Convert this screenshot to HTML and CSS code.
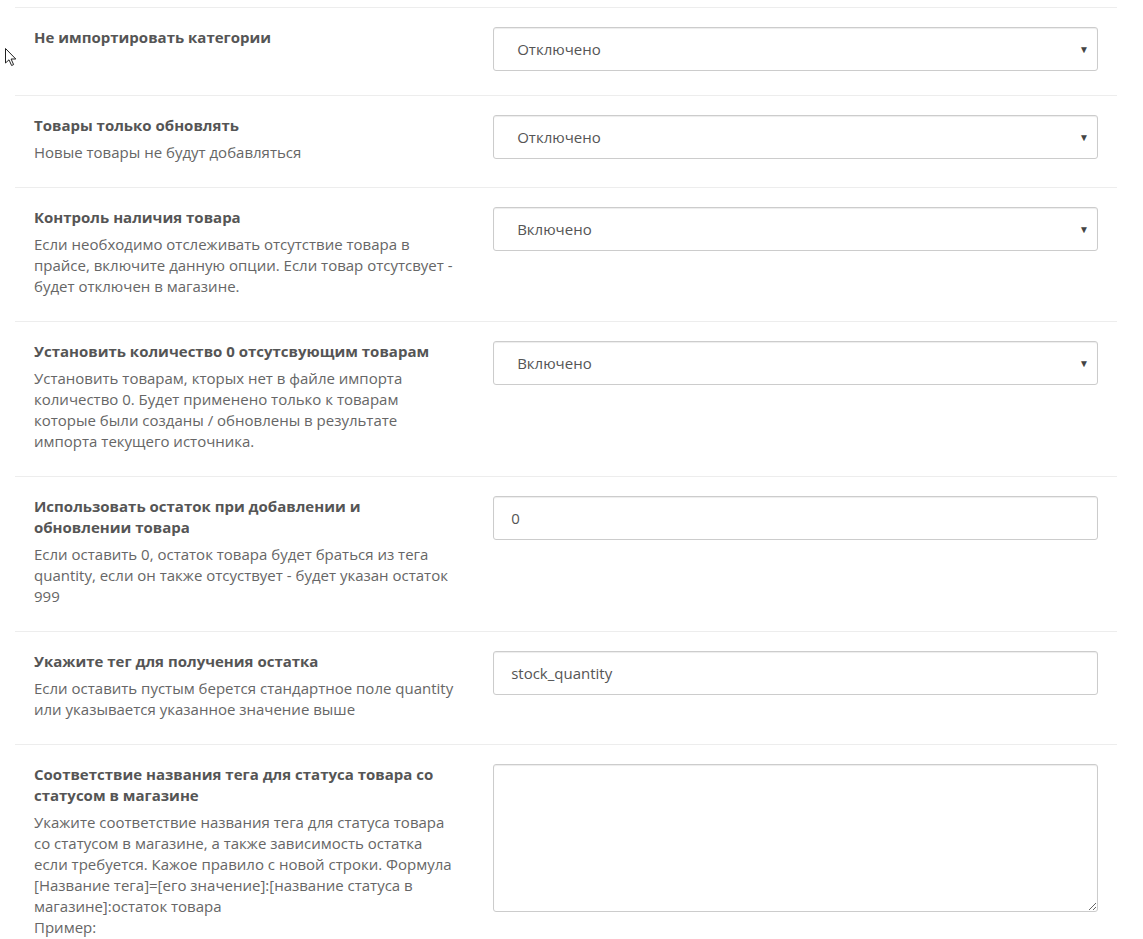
FILE: index.html
```html
<!DOCTYPE html>
<html lang="ru">
<head>
    <meta charset="UTF-8">
    <title>Настройки импорта</title>
    <link rel="stylesheet" href="styles.css">
</head>
<body>
    <div class="cursor">
        <svg width="13" height="20" viewBox="0 0 13 20">
            <path d="M1.5 1.5 L1.5 16 L5 12.8 L7.6 18.5 L9.6 17.6 L7.1 12 L11.8 12 Z" fill="#fff" stroke="#222" stroke-width="1" stroke-linejoin="round"/>
        </svg>
    </div>

    <div class="form">
        <div class="row">
            <div class="label">
                <div class="title">Не импортировать категории</div>
            </div>
            <div class="control">
                <div class="select">Отключено<span class="caret">▼</span></div>
            </div>
        </div>

        <div class="row">
            <div class="label">
                <div class="title">Товары только обновлять</div>
                <div class="help">Новые товары не будут добавляться</div>
            </div>
            <div class="control">
                <div class="select">Отключено<span class="caret">▼</span></div>
            </div>
        </div>

        <div class="row">
            <div class="label">
                <div class="title">Контроль наличия товара</div>
                <div class="help">Если необходимо отслеживать отсутствие товара в прайсе, включите данную опции. Если товар отсутсвует - будет отключен в магазине.</div>
            </div>
            <div class="control">
                <div class="select">Включено<span class="caret">▼</span></div>
            </div>
        </div>

        <div class="row">
            <div class="label">
                <div class="title">Установить количество 0 отсутсвующим товарам</div>
                <div class="help">Установить товарам, кторых нет в файле импорта количество 0. Будет применено только к товарам которые были созданы / обновлены в результате импорта текущего источника.</div>
            </div>
            <div class="control">
                <div class="select">Включено<span class="caret">▼</span></div>
            </div>
        </div>

        <div class="row">
            <div class="label">
                <div class="title">Использовать остаток при добавлении и обновлении товара</div>
                <div class="help">Если оставить 0, остаток товара будет браться из тега quantity, если он также отсуствует - будет указан остаток 999</div>
            </div>
            <div class="control">
                <input class="input" type="text" value="0">
            </div>
        </div>

        <div class="row">
            <div class="label">
                <div class="title">Укажите тег для получения остатка</div>
                <div class="help">Если оставить пустым берется стандартное поле quantity или указывается указанное значение выше</div>
            </div>
            <div class="control">
                <input class="input" type="text" value="stock_quantity">
            </div>
        </div>

        <div class="row">
            <div class="label">
                <div class="title">Соответствие названия тега для статуса товара со статусом в магазине</div>
                <div class="help">Укажите соответствие названия тега для статуса товара со статусом в магазине, а также зависимость остатка если требуется. Кажое правило с новой строки. Формула [Название тега]=[его значение]:[название статуса в магазине]:остаток товара<br>Пример:</div>
            </div>
            <div class="control">
                <textarea class="textarea"></textarea>
            </div>
        </div>
    </div>
</body>
</html>
```

FILE: styles.css
```css
body {
    margin: 0;
    padding: 0;
    background: #fff;
    font: 15px/21px "Open Sans", "Liberation Sans", sans-serif;
    color: #666;
}
.cursor {
    position: absolute;
    left: 4px;
    top: 47px;
}
.form {
    margin: 7px 26px 0 15px;
}
.row {
    display: grid;
    grid-template-columns: 5fr 7fr;
    border-top: 1px solid #ededed;
    padding: 19px 0 24px;
}
.label {
    padding: 0 19px;
}
.title {
    font-weight: 700;
    color: #555;
}
.help {
    margin-top: 6px;
    color: #666;
}
.control {
    padding: 0 19px;
}
.select,
.input,
.textarea {
    box-sizing: border-box;
    width: 100%;
    border: 1px solid #ccc;
    border-radius: 3px;
    background: #fff;
    box-shadow: inset 0 1px 1px rgba(0, 0, 0, 0.075);
    font: 15px/21px "Open Sans", "Liberation Sans", sans-serif;
    color: #555;
}
.select {
    position: relative;
    height: 44px;
    padding: 11px 23px;
}
.caret {
    position: absolute;
    right: 8px;
    top: 11px;
    font-size: 10px;
    color: #444;
}
.input {
    display: block;
    height: 44px;
    padding: 10px 17px;
    margin: 0;
}
.textarea {
    display: block;
    height: 148px;
    padding: 10px 17px;
    margin: 0;
    resize: both;
}
```
